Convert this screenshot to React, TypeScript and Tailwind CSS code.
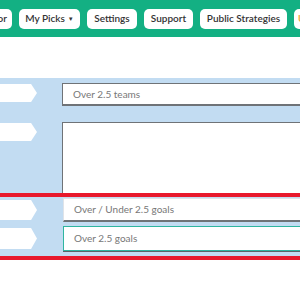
export default function App() {
  const arrow =
    "shrink-0 w-[37px] bg-white [clip-path:polygon(0_0,84%_0,100%_50%,84%_100%,0_100%)]";
  const btn =
    "shrink-0 h-[20px] rounded-[5px] bg-white flex items-center text-[10px] font-semibold text-[#333]";

  return (
    <div className="w-[300px] h-[300px] overflow-hidden bg-white font-['Lato',sans-serif]">
      {/* top nav */}
      <div className="h-[37px] bg-[#13b083] flex items-center gap-[7px] overflow-hidden">
        <div className={`${btn} -ml-[48px] w-[60px] justify-end pr-[5px]`}>Creator</div>
        <div className={`${btn} w-[61px] justify-center gap-[3px]`}>
          My Picks
          <span className="text-[6px] leading-none">▼</span>
        </div>
        <div className={`${btn} w-[50px] justify-center`}>Settings</div>
        <div className={`${btn} w-[49px] justify-center`}>Support</div>
        <div className={`${btn} w-[87px] justify-center`}>Public Strategies</div>
        <div className={`${btn} w-[60px] pl-[4px] text-[#f0a030]`}>Upgrade</div>
      </div>

      <div className="h-[41px]" />

      {/* form panel */}
      <div className="bg-[#c2dcf2] pt-[5px]">
        <div className="flex items-start">
          <div className={`${arrow} h-[18px] mt-[1px]`} />
          <div className="ml-[25px] w-[260px] shrink-0 h-[23px] bg-white border border-[#6f7377] border-b-2 flex items-center pl-[10px] text-[10px] text-[#777]">
            Over 2.5 teams
          </div>
        </div>

        <div className="flex items-start mt-[16px]">
          <div className={`${arrow} h-[18px] mt-[1px]`} />
          <div className="ml-[25px] w-[260px] shrink-0 h-[71px] bg-white border border-[#6f7377] border-b-0" />
        </div>

        <div className="border-y-4 border-[#e8192c] pt-[1px] pb-[5px] flex flex-col gap-[4px]">
          <div className="flex items-center">
            <div className={`${arrow} h-[20px]`} />
            <div className="ml-[26px] w-[260px] shrink-0 h-[24px] bg-white border border-[#dfe3e8] border-b-2 border-b-[#6f7377] flex items-center pl-[10px] text-[10px] text-[#777]">
              Over / Under 2.5 goals
            </div>
          </div>
          <div className="flex items-center">
            <div className={`${arrow} h-[21px]`} />
            <div className="ml-[26px] w-[260px] shrink-0 h-[25px] bg-white border border-[#2fb5a0] shadow-[0_1px_0_#5d6468] flex items-center pl-[10px] text-[10px] text-[#777]">
              Over 2.5 goals
            </div>
          </div>
        </div>
      </div>
    </div>
  );
}
